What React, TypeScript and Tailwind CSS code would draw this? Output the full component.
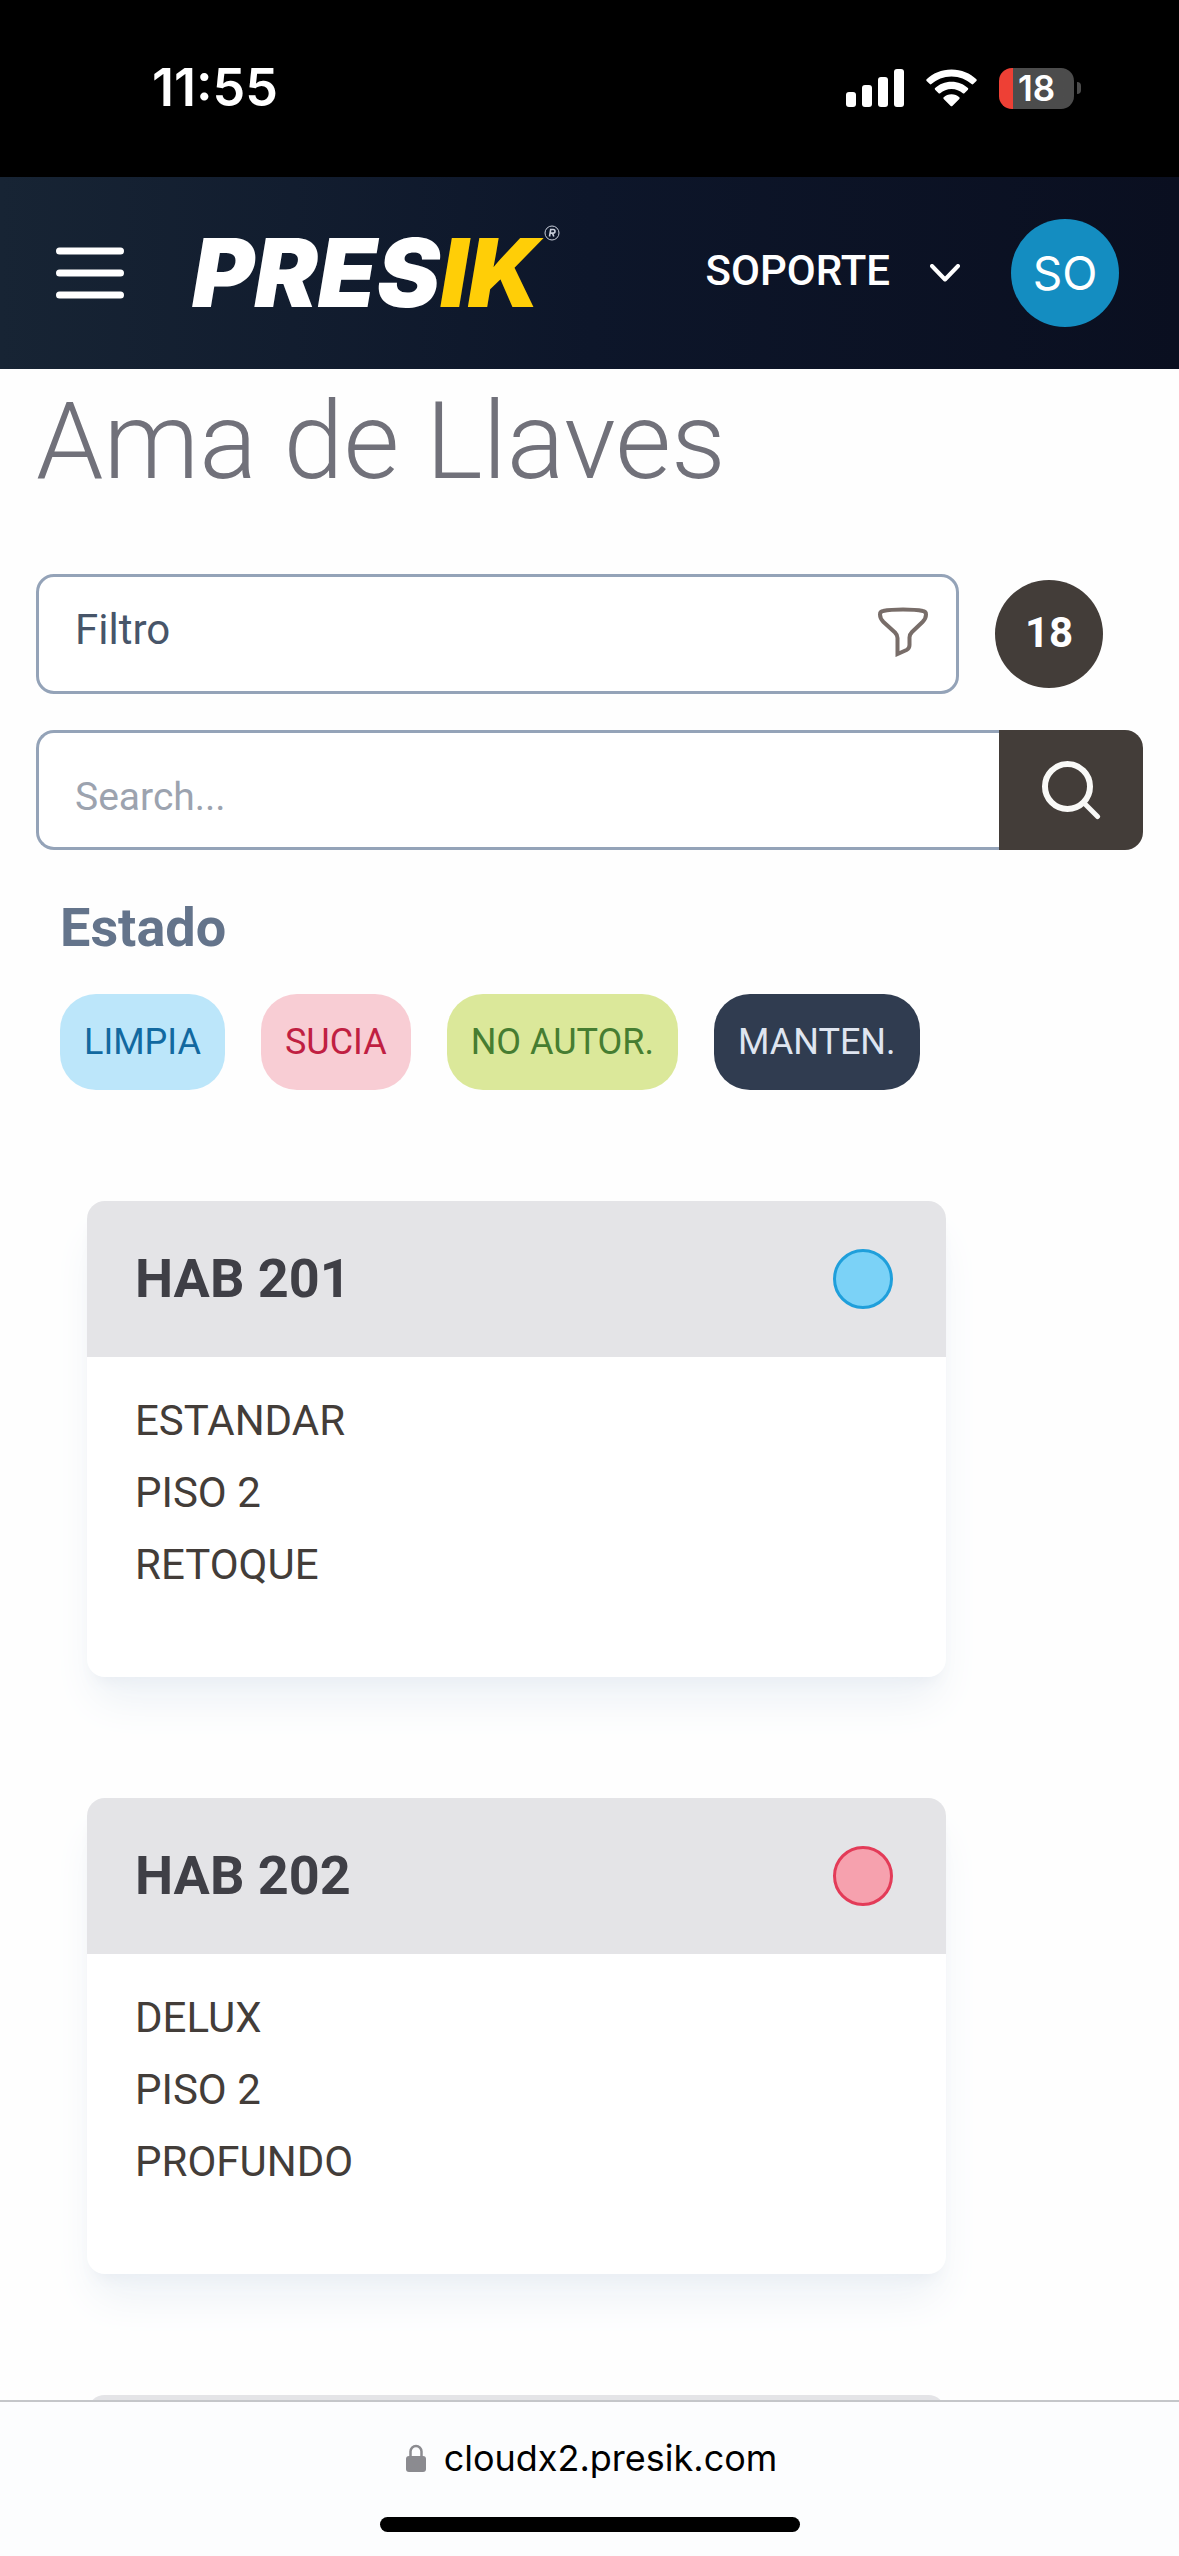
import React from "react";

interface Room {
  name: string;
  details: string[];
  dot: string;
}

const rooms: Room[] = [
  {
    name: "HAB 201",
    details: ["ESTANDAR", "PISO 2", "RETOQUE"],
    dot: "bg-[#7bd2f7] border-[#1f9fdb]",
  },
  {
    name: "HAB 202",
    details: ["DELUX", "PISO 2", "PROFUNDO"],
    dot: "bg-[#f6a1ae] border-[#e33b58]",
  },
];

const states = [
  { label: "LIMPIA", style: "bg-[#bce6fa] text-[#1269a0]" },
  { label: "SUCIA", style: "bg-[#f8cdd4] text-[#c01f42]" },
  { label: "NO AUTOR.", style: "bg-[#dbe89a] text-[#467d31]" },
  { label: "MANTEN.", style: "bg-[#303c50] text-[#dfe5f0]" },
];

const StatusBar = () => {
  return (
    <div className="flex h-[177px] shrink-0 items-center justify-between bg-black pb-px pl-[152px] pr-[98px] text-white">
      <span className="font-['Inter',sans-serif] text-[52px] font-semibold leading-[60px]">
        11:55
      </span>
      <div className="flex items-center gap-[22px]">
        <svg className="h-[38px] w-[58px]" viewBox="0 0 58 38" fill="currentColor">
          <rect x="0" y="23" width="10" height="15" rx="3" />
          <rect x="16" y="16" width="10" height="22" rx="3" />
          <rect x="32" y="8" width="10" height="30" rx="3" />
          <rect x="48" y="0" width="10" height="38" rx="3" />
        </svg>
        <svg className="h-[38px] w-[51px]" viewBox="0 0 51 38" fill="currentColor">
          <path d="M25.500 0.500C35.500 0.500 44.300 4.300 50.400 10.300Q51.100 11.100 50.400 11.900L47.200 15.100Q46.400 15.800 45.600 15.100C40.400 10.300 33.400 7.400 25.500 7.400S10.600 10.300 5.400 15.100Q4.600 15.800 3.800 15.100L0.600 11.900Q-0.100 11.100 0.600 10.300C6.700 4.300 15.500 0.500 25.500 0.500Z" />
          <path d="M25.500 12.800C32 12.800 37.700 15.200 41.900 19.100Q42.700 19.900 41.900 20.700L38.400 24.200Q37.600 24.900 36.800 24.200C33.800 21.500 29.900 19.900 25.500 19.900S17.200 21.500 14.200 24.200Q13.400 24.900 12.600 24.200L9.100 20.700Q8.300 19.900 9.100 19.100C13.300 15.200 19 12.800 25.500 12.800Z" />
          <path d="M25.500 25.300C28.600 25.300 31.300 26.400 33.300 28.200Q34.200 29 33.300 29.900L26.300 36.900Q25.500 37.600 24.700 36.900L17.700 29.900Q16.800 29 17.700 28.200C19.700 26.400 22.400 25.300 25.500 25.300Z" />
        </svg>
        <div className="flex items-center gap-[3px]">
          <span className="flex h-[41px] w-[75px] items-center justify-center rounded-[13px] bg-linear-to-r from-[#ee4035] from-[14px] to-[#4c4c4c] to-[14px] font-['Inter',sans-serif] text-[35px] font-semibold leading-[41px]">
            18
          </span>
          <span className="h-3 w-1 rounded-r-full bg-[#4c4c4c]" />
        </div>
      </div>
    </div>
  );
};

const Header = () => {
  return (
    <header className="flex h-48 shrink-0 items-center bg-linear-to-r from-[#172434] via-[#0d162a] to-[#0a0f20] pl-14 pr-[60px] text-white">
      <button aria-label="Menu">
        <svg className="h-[52px] w-[68px]" viewBox="0 0 68 52" stroke="currentColor" strokeWidth="7" strokeLinecap="round">
          <path d="M3.500 4h61M3.500 26h61M3.500 48h61" />
        </svg>
      </button>
      <a href="#" className="ml-[68px] flex items-start gap-1 font-['Inter',sans-serif] text-[95px] font-black italic leading-[96px]">
        <span>
          PRES<span className="text-[#ffce07]">IK</span>
        </span>
        <svg className="h-4 w-4" viewBox="0 0 16 16" fill="none" stroke="#c9cfdb">
          <circle cx="8" cy="8" r="7" />
          <path d="M5.500 11.500l1.200-7h2.500a1.800 1.800 0 0 1 0 3.600H6.400M8.500 8.200l1.300 3.300" strokeWidth="1.600" />
        </svg>
      </a>
      <button className="ml-auto flex items-center gap-10 text-[42px] font-medium leading-[60px]">
        <span className="pb-1">SOPORTE</span>
        <svg className="h-[18px] w-[30px]" viewBox="0 0 30 18" fill="none" stroke="currentColor" strokeWidth="4" strokeLinecap="round" strokeLinejoin="round">
          <path d="M2 2l13 13.500L28 2" />
        </svg>
      </button>
      <span className="ml-[51px] flex size-[108px] items-center justify-center rounded-full bg-[#148dc1] font-['Inter',sans-serif] text-[46px]">
        SO
      </span>
    </header>
  );
};

const RoomCard: React.FC<Room> = ({ name, details, dot }) => {
  return (
    <article className="overflow-hidden rounded-[18px] bg-white shadow-[0_30px_45px_-9px_#ecf1f6,0_12px_18px_-12px_#d5d9e2]">
      <div className="flex h-[156px] items-center justify-between bg-[#e4e4e7] pl-12 pr-[53px]">
        <h3 className="text-[54px] font-bold leading-[72px] text-[#3f3f46]">
          {name}
        </h3>
        <span className={`size-[60px] rounded-full border-3 ${dot}`} />
      </div>
      <ul className="px-12 pb-[76px] pt-7 text-[42px] leading-[72px] text-[#433d39]">
        {details.map((item) => (
          <li key={item}>{item}</li>
        ))}
      </ul>
    </article>
  );
};

const BrowserBar = () => {
  return (
    <footer className="flex h-[156px] shrink-0 flex-col items-center border-t-2 border-[#c4c6c9] bg-[#fcfdfe] pt-8">
      <div className="flex items-center gap-[18px] pl-1 font-['Inter',sans-serif] text-[36px] leading-[48px] text-black">
        <svg className="h-7 w-5" viewBox="0 0 20 28" fill="#8b8b90">
          <rect x="0" y="12" width="20" height="16" rx="3" />
          <path d="M4.500 13V7.500a5.500 5.500 0 0 1 11 0V13" fill="none" stroke="#8b8b90" strokeWidth="2.500" />
        </svg>
        cloudx2.presik.com
      </div>
      <span className="mt-[35px] h-[15px] w-[420px] rounded-full bg-black" />
    </footer>
  );
};

export default function App() {
  return (
    <div className="flex h-screen flex-col overflow-hidden bg-[#fefefe] font-['Roboto',sans-serif]">
      <StatusBar />
      <Header />
      <main className="min-h-0 flex-1 overflow-hidden px-9 pt-3">
        <h1 className="text-[108px] font-light leading-[120px] text-[#71717a]">
          Ama de Llaves
        </h1>

        <div className="mt-[73px] flex items-center gap-9">
          <button className="flex h-[120px] w-[923px] items-center justify-between rounded-[18px] border-3 border-[#94a3b8] bg-white pl-9 pr-7 text-[42px] leading-[60px] text-[#475569]">
            <span className="pb-2">Filtro</span>
            <svg className="mb-1 h-[50px] w-[50px]" viewBox="0 0 50 50" fill="none" stroke="#786d69" strokeWidth="4">
              <path d="M25 2.500C33 2.500 40 3 45 4Q48 4.500 48 7.500C48 11 46.500 13 44.500 15L34 25Q31.500 27.500 31.500 30.500V38Q31.500 41.500 28.500 43L19.500 47V31Q19.500 28 17 25.500L5.500 15C3.500 13 2 11 2 7.500Q2 4.500 5 4C10 3 17 2.500 25 2.500Z" />
            </svg>
          </button>
          <span className="flex size-[108px] items-center justify-center rounded-full bg-[#433d39] pb-1 text-[42px] font-bold text-white">
            18
          </span>
        </div>

        <div className="mt-9 flex h-[120px]">
          <input
            type="text"
            aria-label="Search"
            placeholder="Search..."
            className="min-w-0 flex-1 rounded-l-[18px] border-3 border-r-0 border-[#94a3b8] bg-white px-9 pt-[14px] text-[39px] leading-[60px] outline-none placeholder:text-[#9ca3af]"
          />
          <button aria-label="Buscar" className="flex w-36 items-center justify-center rounded-r-[18px] bg-[#433d39]">
            <svg className="h-15 w-15" viewBox="0 0 60 60" fill="none" stroke="#f9f9f7" strokeWidth="6" strokeLinecap="round">
              <circle cx="26.500" cy="26.500" r="22.500" />
              <path d="M43 43l13.500 13.500" strokeWidth="5" />
            </svg>
          </button>
        </div>

        <section className="mt-[42px] px-6">
          <h2 className="text-[54px] font-bold leading-[72px] text-[#64748b]">
            Estado
          </h2>
          <div className="mt-[30px] flex gap-9">
            {states.map((s) => (
              <button
                key={s.label}
                className={`h-24 rounded-[36px] px-6 text-[36px] leading-[48px] ${s.style}`}
              >
                {s.label}
              </button>
            ))}
          </div>
        </section>

        <section className="mt-[111px] flex w-[910px] flex-col gap-[121px] pl-[51px]">
          {rooms.map((room) => (
            <RoomCard key={room.name} {...room} />
          ))}
          {/* next card peeks above the browser bar */}
          <div className="h-[156px] rounded-t-[18px] bg-[#e4e4e7]" />
        </section>
      </main>
      <BrowserBar />
    </div>
  );
}
